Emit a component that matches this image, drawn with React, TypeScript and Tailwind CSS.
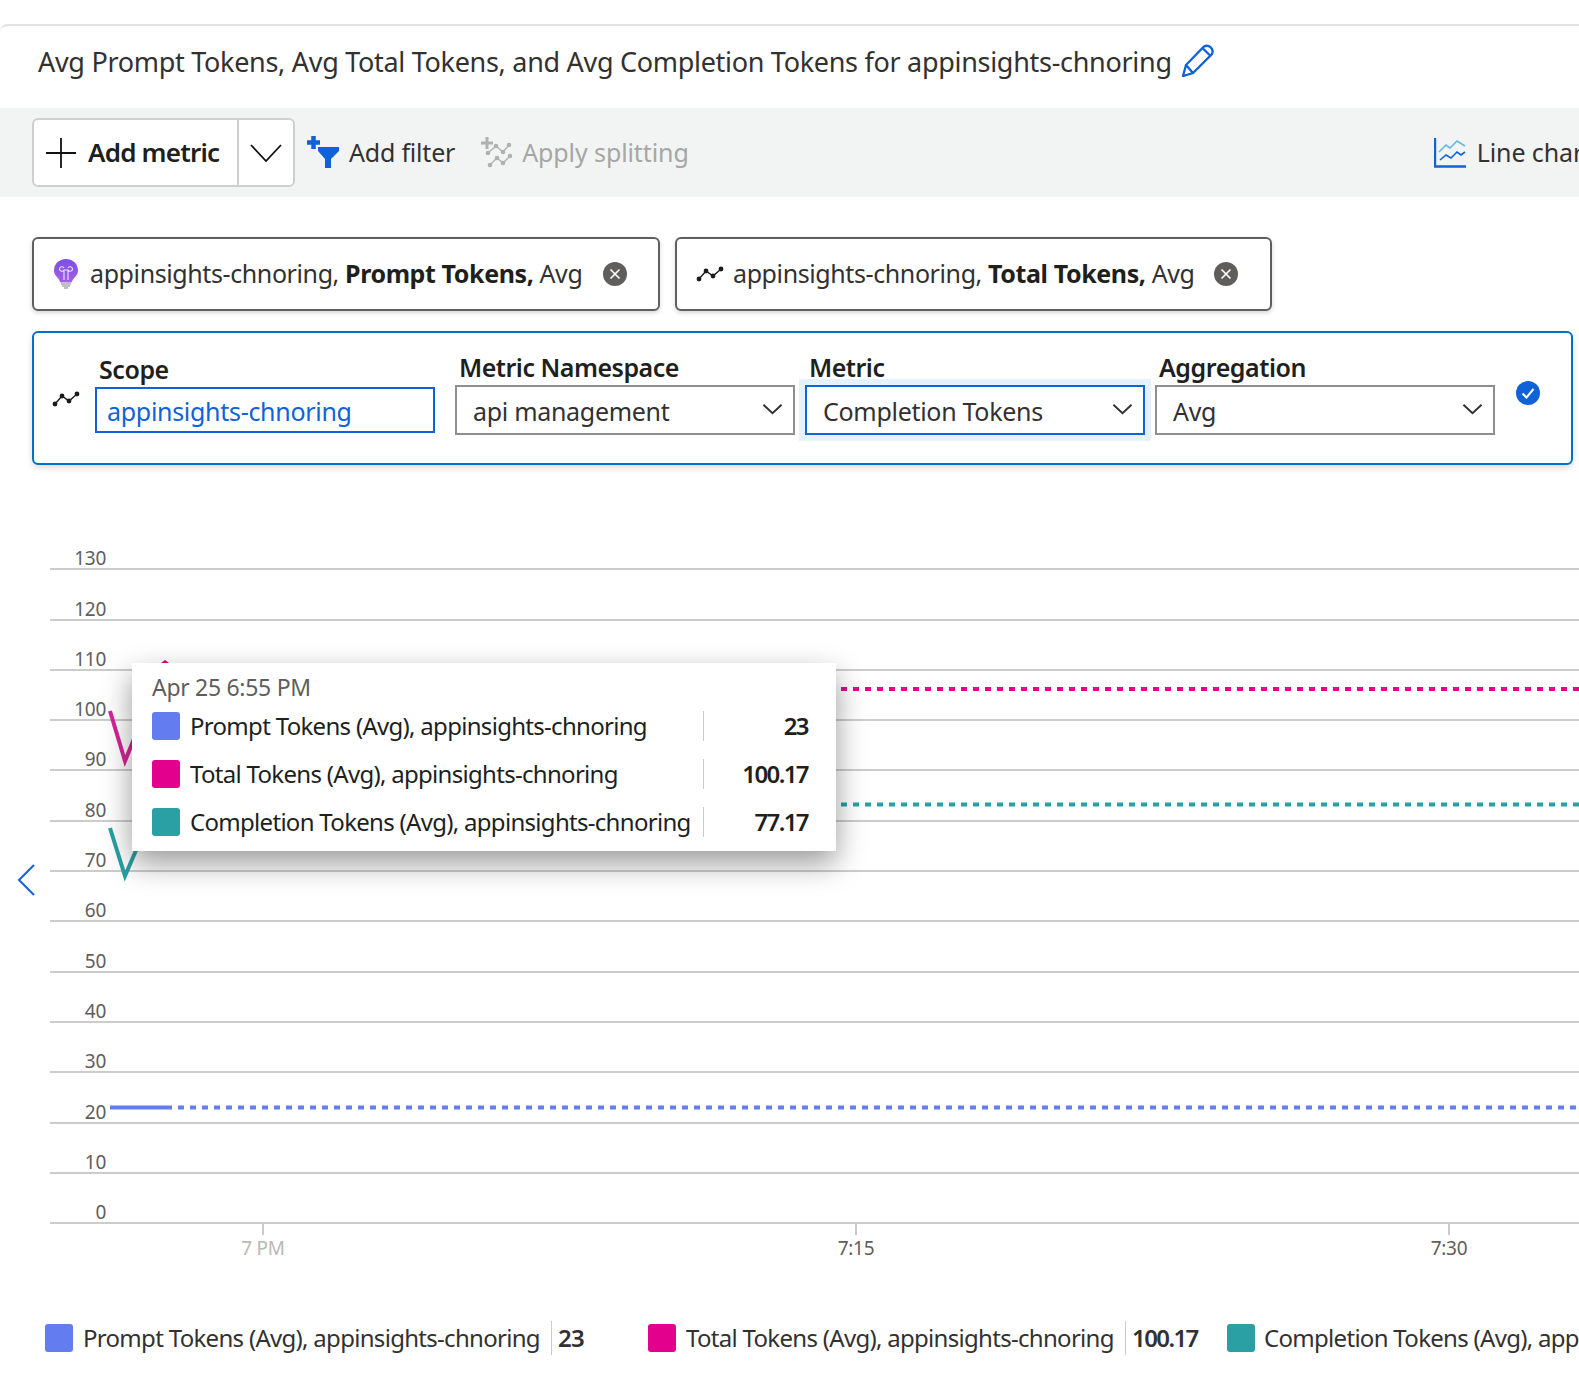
const axisValues = [130, 120, 110, 100, 90, 80, 70, 60, 50, 40, 30, 20, 10, 0]

const tooltipRows = [
  { label: 'Prompt Tokens (Avg), appinsights-chnoring', value: '23', swatch: 'bg-[#637cef]' },
  { label: 'Total Tokens (Avg), appinsights-chnoring', value: '100.17', swatch: 'bg-[#e3008c]' },
  { label: 'Completion Tokens (Avg), appinsights-chnoring', value: '77.17', swatch: 'bg-[#2aa0a4]' }
]

function MetricDots({ className }: { className: string }) {
  return (
    <svg viewBox="0 0 28 16" className={className}>
      <path d="M3 13 L10 5 L17 10 L25 3" fill="none" stroke="#1b1a19" strokeWidth="1.4" />
      <circle cx="3" cy="13" r="2.4" fill="#1b1a19" />
      <circle cx="10" cy="5" r="2.4" fill="#1b1a19" />
      <circle cx="17" cy="10" r="2.4" fill="#1b1a19" />
      <circle cx="25" cy="3" r="2.4" fill="#1b1a19" />
    </svg>
  )
}

function CloseCircle() {
  return (
    <svg viewBox="0 0 24 24" className="h-[24px] w-[24px] shrink-0">
      <circle cx="12" cy="12" r="12" fill="#605e5c" />
      <path d="M7.5 7.5 L16.5 16.5 M16.5 7.5 L7.5 16.5" stroke="#fff" strokeWidth="1.7" />
    </svg>
  )
}

function Chevron({ className }: { className: string }) {
  return (
    <svg viewBox="0 0 22 12" className={className}>
      <path d="M1.5 1.5 L11 10.5 L20.5 1.5" fill="none" stroke="#323130" strokeWidth="2" />
    </svg>
  )
}

function Select({ value, focused }: { value: string; focused?: boolean }) {
  return (
    <div
      className={`flex h-[50px] w-[340px] items-center justify-between border-2 pl-[16px] pr-[10px] text-[25px] text-[#323130] ${
        focused ? 'border-[#0f62d8] shadow-[0_0_0_6px_#e5f1fb]' : 'border-[#8f8f8f]'
      }`}
    >
      <span className="mt-[4px] tracking-[-0.3px]">{value}</span>
      <Chevron className="mb-[2px] h-[12px] w-[21px]" />
    </div>
  )
}

function Chip({ icon, metric, closeGap }: { icon: React.ReactNode; metric: string; closeGap: string }) {
  return (
    <div className={`flex h-[74px] shrink-0 items-center rounded-md border-2 border-[#5f5f5f] bg-white pl-[20px] shadow-[0_2px_4px_rgba(0,0,0,0.16)] ${closeGap}`}>
      {icon}
      <span className="ml-[12px] whitespace-nowrap text-[25px] tracking-[-0.4px] text-[#323130]">
        appinsights-chnoring, <b className="font-bold text-[#201f1e]">{metric},</b> Avg
      </span>
      <span className="ml-auto">
        <CloseCircle />
      </span>
    </div>
  )
}

export default function App() {
  return (
    <div className="relative h-[1390px] w-[1579px] overflow-hidden bg-white pt-[24px] font-['Noto_Sans',sans-serif]">
      <div className="flex h-[84px] items-center rounded-tl-lg border-t-2 border-[#e2e2e2] pb-[10px] pl-[38px]">
        <span className="whitespace-nowrap text-[27px] tracking-[-0.3px] text-[#323130]">
          Avg Prompt Tokens, Avg Total Tokens, and Avg Completion Tokens for appinsights-chnoring
        </span>
        <svg viewBox="0 0 32 34" className="mb-[4px] ml-[10px] h-[34px] w-[32px] shrink-0">
          <path d="M1 33 L4 22 L22 3.5 A5.8 5.8 0 0 1 30 11 L11 30 Z M4 22 L11 30 M20.5 5 L28.5 13" fill="none" stroke="#0f62d8" strokeWidth="2.3" />
        </svg>
      </div>

      <div className="flex h-[89px] items-center whitespace-nowrap bg-[#f2f4f4] pl-[32px] text-[25px]">
        <div className="flex h-[69px] w-[263px] shrink-0 items-center rounded-md border-2 border-[#cfcfcf] bg-white">
          <svg viewBox="0 0 30 30" className="ml-[12px] h-[30px] w-[30px] shrink-0">
            <path d="M0 15 H30 M15 0 V30" stroke="#111" strokeWidth="1.8" />
          </svg>
          <span className="ml-[12px] w-[149px] shrink-0 text-[26px] font-semibold tracking-[-0.8px] text-[#201f1e]">Add metric</span>
          <div className="flex h-full flex-1 items-center justify-center border-l-2 border-[#cfcfcf]">
            <svg viewBox="0 0 32 18" className="h-[18px] w-[32px]">
              <path d="M1 1 L16 17 L31 1" fill="none" stroke="#111" strokeWidth="1.8" />
            </svg>
          </div>
        </div>
        <svg viewBox="0 0 33 33" className="ml-[12px] h-[33px] w-[33px] shrink-0">
          <path d="M0 6.5 H13 M6.5 0 V13" stroke="#0f62d8" strokeWidth="4.5" />
          <path d="M11 11 H32 V15 L24 23 V32 H18 V23 L11 15 Z" fill="#0f62d8" />
        </svg>
        <span className="ml-[9px] shrink-0 tracking-[-0.2px] text-[#323130]">Add filter</span>
        <svg viewBox="0 0 31 31" className="ml-[26px] h-[31px] w-[31px] shrink-0">
          <path d="M0 6 H12 M6 0 V12" stroke="#b0b0b0" strokeWidth="3" />
          <path d="M7 16 L15 9 L22 15 L28 8 M9 28 L16 21 L22 26 L29 19" fill="none" stroke="#b0b0b0" strokeWidth="1.3" />
          <circle cx="7" cy="16" r="2.3" fill="#b0b0b0" />
          <circle cx="15" cy="9" r="2.3" fill="#b0b0b0" />
          <circle cx="22" cy="15" r="2.3" fill="#b0b0b0" />
          <circle cx="28" cy="8" r="2.3" fill="#b0b0b0" />
          <circle cx="9" cy="28" r="2.3" fill="#b0b0b0" />
          <circle cx="16" cy="21" r="2.3" fill="#b0b0b0" />
          <circle cx="22" cy="26" r="2.3" fill="#b0b0b0" />
          <circle cx="29" cy="19" r="2.3" fill="#b0b0b0" />
        </svg>
        <span className="ml-[10px] shrink-0 tracking-[-0.1px] text-[#a6a6a6]">Apply splitting</span>
        <svg viewBox="0 0 32 30" className="ml-[745px] h-[30px] w-[32px] shrink-0">
          <path d="M1 0 V28.5 H32" fill="none" stroke="#0f62d8" strokeWidth="2.4" />
          <path d="M5 14 L12 7 L16 10 L23 3 L31 8" fill="none" stroke="#62b9e0" strokeWidth="1.6" />
          <path d="M6 22 L12 17 L17 20 L23 14 L27 17 L31 14" fill="none" stroke="#0f62d8" strokeWidth="1.6" />
        </svg>
        <span className="ml-[11px] shrink-0 tracking-[-0.1px] text-[#323130]">Line chart</span>
      </div>

      <div className="ml-[32px] mt-[40px] flex gap-[15px]">
        <Chip
          closeGap="w-[628px] pr-[31px]"
          metric="Prompt Tokens"
          icon={
            <svg viewBox="0 0 24 30" className="h-[30px] w-[24px] shrink-0">
              <defs>
                <linearGradient id="bulbFill" x1="0" y1="0" x2="0" y2="1">
                  <stop offset="0" stopColor="#7b4fe6" />
                  <stop offset="1" stopColor="#a45fe4" />
                </linearGradient>
              </defs>
              <path d="M12 0 C5 0 0 5 0 11.5 C0 17 4.5 18 6.5 23.5 H17.5 C19.5 18 24 17 24 11.5 C24 5 19 0 12 0 Z" fill="url(#bulbFill)" />
              <path d="M10 21 V11 M14 21 V11 M5.5 10 A2.4 2.4 0 0 0 10 11 H14 A2.4 2.4 0 0 0 18.5 10 A2.4 2.4 0 0 0 14 9 M10 9 A2.4 2.4 0 0 0 5.5 10" fill="none" stroke="#efe6fd" strokeWidth="1.1" />
              <path d="M7 25 H17 M8 27 H16 M10 29 H14" stroke="#a9a9a9" strokeWidth="1.5" />
            </svg>
          }
        />
        <Chip
          closeGap="w-[597px] pr-[32px]"
          metric="Total Tokens"
          icon={<MetricDots className="ml-[-1px] mr-[-3px] h-[16px] w-[28px] shrink-0" />}
        />
      </div>

      <div className="ml-[32px] mt-[20px] flex h-[134px] w-[1541px] rounded-md border-2 border-[#0072c6] bg-white shadow-[0_3px_6px_rgba(0,0,0,0.14)]">
        <MetricDots className="ml-[18px] mt-[58px] h-[16px] w-[28px] shrink-0" />
        <div className="ml-[15px] mt-[20px] w-[340px]">
          <div className="ml-[4px] h-[34px] text-[25px] font-semibold leading-[32px] tracking-[-0.45px] text-[#201f1e]">Scope</div>
          <div className="flex h-[46px] items-center border-2 border-[#0f62d8] pl-[10px] pt-[4px] text-[25px] tracking-[-0.3px] text-[#0f62d8]">appinsights-chnoring</div>
        </div>
        <div className="ml-[20px] mt-[18px] w-[340px]">
          <div className="ml-[4px] h-[34px] text-[25px] font-semibold leading-[32px] tracking-[-0.5px] text-[#201f1e]">Metric Namespace</div>
          <Select value="api management" />
        </div>
        <div className="ml-[10px] mt-[18px] w-[340px]">
          <div className="ml-[4px] h-[34px] text-[25px] font-semibold leading-[32px] tracking-[-0.5px] text-[#201f1e]">Metric</div>
          <Select value="Completion Tokens" focused />
        </div>
        <div className="ml-[10px] mt-[18px] w-[340px]">
          <div className="ml-[4px] h-[34px] text-[25px] font-semibold leading-[32px] tracking-[-0.45px] text-[#201f1e]">Aggregation</div>
          <Select value="Avg" />
        </div>
        <svg viewBox="0 0 24 24" className="ml-[21px] mt-[48px] h-[24px] w-[24px] shrink-0">
          <circle cx="12" cy="12" r="12" fill="#0f62d8" />
          <path d="M6.5 12.5 L10.5 16.5 L17.5 8" fill="none" stroke="#fff" strokeWidth="2" />
        </svg>
      </div>

      <div className="relative pt-[55px]">
        {axisValues.map((v) => (
          <div key={v} className="ml-[50px] flex h-[50.3px] items-end border-b-2 border-[#cccccc]">
            <span className="w-[56px] text-right text-[19px] leading-[20px] tracking-[-0.3px] text-[#605e5c]">{v}</span>
          </div>
        ))}

        <div className="ml-[213px] flex gap-[493px] text-[19px] leading-[24px] tracking-[-0.3px]">
          {['7 PM', '7:15', '7:30'].map((t, i) => (
            <div key={t} className="flex w-[100px] flex-col items-center">
              <div className="h-[11px] w-[2px] bg-[#cccccc]" />
              <span className={`mt-[1px] ${i === 0 ? 'text-[#b8b8b8]' : 'text-[#605e5c]'}`}>{t}</span>
            </div>
          ))}
        </div>

        <div className="ml-[45px] mt-[64px] flex h-[28px] items-center whitespace-nowrap text-[24px] tracking-[-0.7px] text-[#323130]">
          <div className="h-[28px] w-[28px] shrink-0 rounded-[3px] bg-[#637cef]" />
          <span className="ml-[10px] w-[457px] shrink-0">Prompt Tokens (Avg), appinsights-chnoring</span>
          <div className="ml-[11px] h-[34px] w-[1px] shrink-0 bg-[#cccccc]" />
          <span className="ml-[6px] w-[90px] shrink-0 font-semibold">23</span>
          <div className="h-[28px] w-[28px] shrink-0 rounded-[3px] bg-[#e3008c]" />
          <span className="ml-[10px] w-[429px] shrink-0">Total Tokens (Avg), appinsights-chnoring</span>
          <div className="ml-[10px] h-[34px] w-[1px] shrink-0 bg-[#cccccc]" />
          <span className="ml-[6px] w-[95px] shrink-0 font-semibold tracking-[-1.6px]">100.17</span>
          <div className="h-[28px] w-[28px] shrink-0 rounded-[3px] bg-[#2aa0a4]" />
          <span className="ml-[9px] shrink-0">Completion Tokens (Avg), appinsights-chnoring</span>
        </div>

        <svg viewBox="0 464 1579 700" className="absolute left-0 top-0 h-[700px] w-[1579px]">
          <path d="M110 710 L125 760 L165 662" fill="none" stroke="#d6249a" strokeWidth="4" />
          <path d="M110 827 L125 875 L170 770" fill="none" stroke="#2aa0a4" strokeWidth="4" />
          <path d="M841 688 H1579" stroke="#e3008c" strokeWidth="4" strokeDasharray="6 6" />
          <path d="M841 803.5 H1579" stroke="#2aa0a4" strokeWidth="4" strokeDasharray="6 6" />
          <path d="M110 1106.5 H166" stroke="#637cef" strokeWidth="4" />
          <path d="M166 1106.5 H1579" stroke="#637cef" strokeWidth="4" strokeDasharray="6 6" />
          <path d="M165 659 L169 662 H161 Z" fill="#e3008c" />
          <path d="M34 864 L19 879 L34 894" fill="none" stroke="#0f62d8" strokeWidth="2" />
        </svg>

        <div className="absolute left-[132px] top-[198px] h-[188px] w-[704px] bg-white pl-[20px] pt-[8px] shadow-[0_12px_28px_rgba(0,0,0,0.4)]">
          <div className="h-[31px] text-[23px] leading-[32px] tracking-[-0.3px] text-[#605e5c]">Apr 25 6:55 PM</div>
          {tooltipRows.map((row) => (
            <div key={row.label} className="flex h-[48px] items-center text-[24px] tracking-[-0.7px] text-[#201f1e]">
              <div className={`h-[28px] w-[28px] shrink-0 rounded-[3px] ${row.swatch}`} />
              <span className="ml-[10px] w-[513px] shrink-0 whitespace-nowrap">{row.label}</span>
              <div className="h-[30px] w-[1px] shrink-0 bg-[#cccccc]" />
              <span className="w-[104px] shrink-0 text-right font-semibold tracking-[-1.6px]">{row.value}</span>
            </div>
          ))}
        </div>
      </div>
    </div>
  )
}
